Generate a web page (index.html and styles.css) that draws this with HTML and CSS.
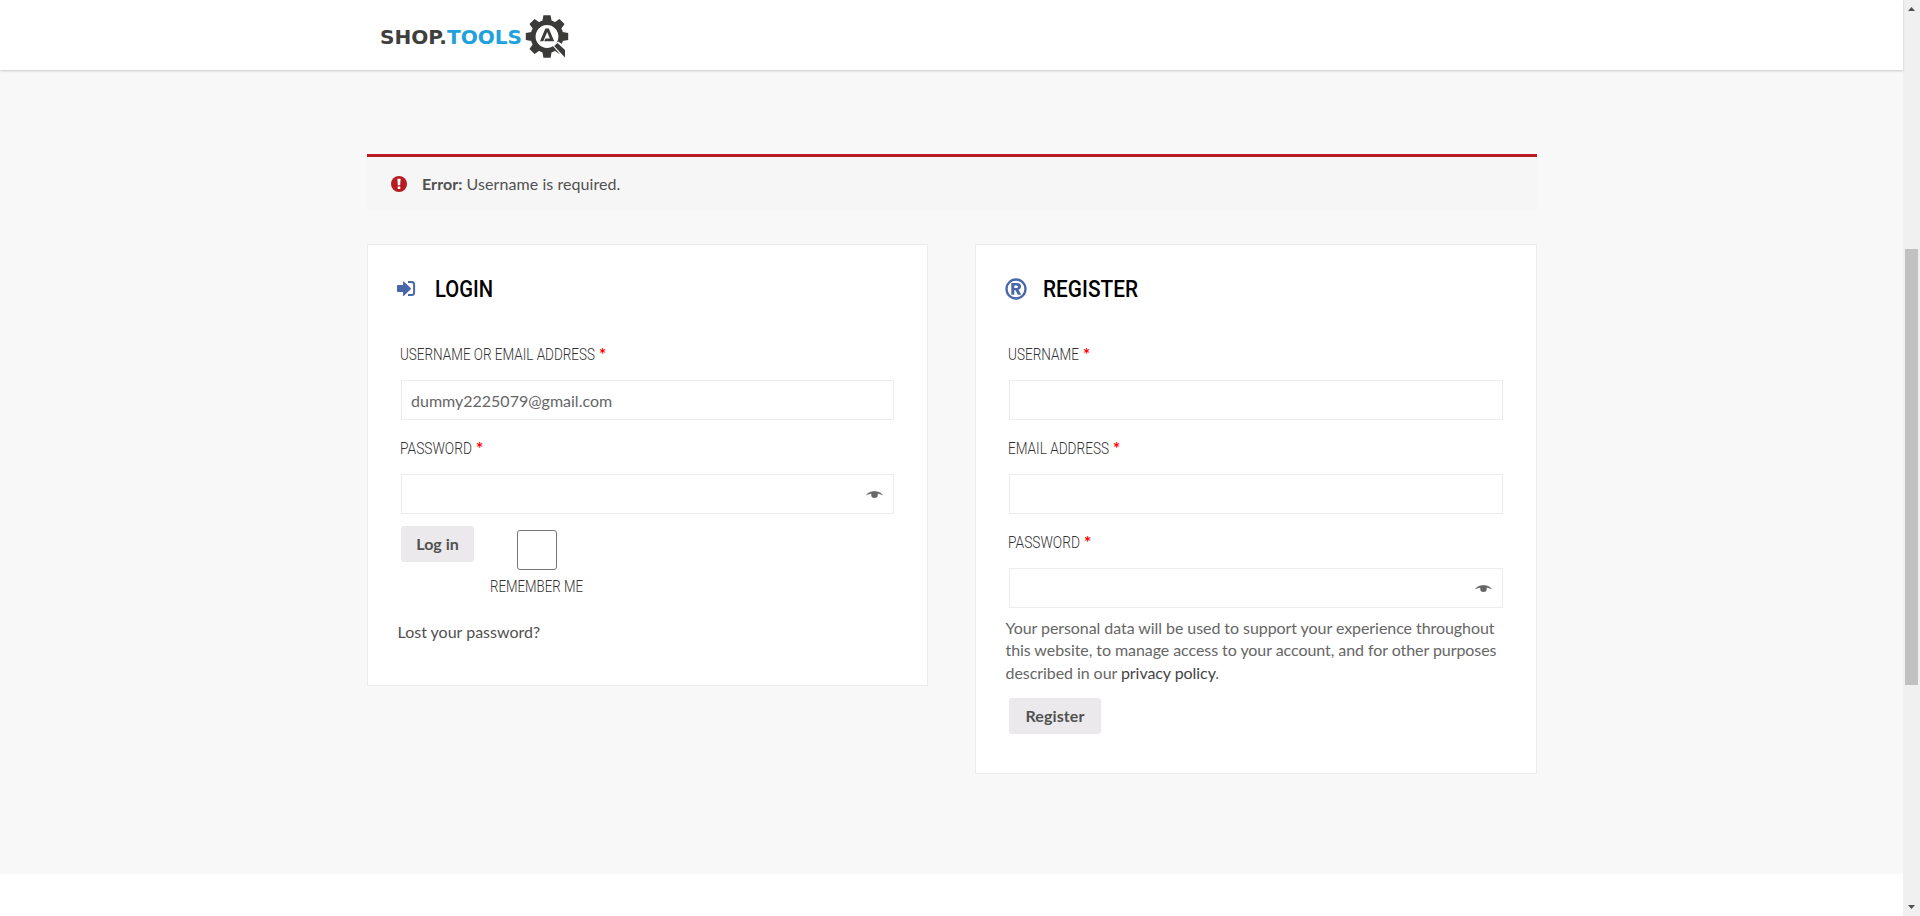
FILE: index.html
```html
<!DOCTYPE html>
<html lang="en">
<head>
<meta charset="utf-8">
<title>Shop.Tools – My account</title>
<link rel="stylesheet" href="styles.css">
</head>
<body>
<div class="page">
  <header class="header">
    <svg class="logo" width="190" height="50" viewBox="0 0 190 50">
      <g class="logo-text">
        <text x="0" y="33.500" textLength="67" lengthAdjust="spacingAndGlyphs" fill="#3f403e">SHOP.</text>
        <text x="67" y="33.500" textLength="75" lengthAdjust="spacingAndGlyphs" fill="#1ea1dc">TOOLS</text>
      </g>
      <g transform="translate(167 26.5)" fill="#3b3c3a">
        <circle r="16.5"/>
        <g><path id="t" d="M-4.6-15.500-3.600-21.200H3.600L4.600-15.500ZM-4.600 15.500-3.600 21.200H3.600L4.600 15.500Z"/>
        <use href="#t" transform="rotate(45)"/><use href="#t" transform="rotate(90)"/><use href="#t" transform="rotate(135)"/></g>
        <circle r="11.4" fill="#fff"/>
        <path d="M5.500 9 17 22.500H22V12L11 5Z" fill="#fff"/>
        <path d="M7.200 9.500 10.500 6.500 18 13.500V21Z"/>
        <path d="M-7 4.800-1.600-8H1.800L7.200 4.800H-2.800L-1.500 2H2.800L.2-4.500-3.700 4.800Z"/>
      </g>
    </svg>
  </header>
  <main class="main">
    <div class="notice">
      <svg class="notice-icon" width="16" height="16" viewBox="0 0 16 16"><circle cx="8" cy="8" r="8" fill="#b81c23"/><path d="M6.400 2.800h3.200L9.200 9.300H6.800ZM6.700 10.600h2.600V13H6.700Z" fill="#fff"/></svg>
      <p><strong>Error:</strong> Username is required.</p>
    </div>
    <div class="columns">
      <section class="card login">
        <h2 class="title">
          <svg width="20" height="22" viewBox="0 0 20 22"><path d="M0 8Q0 7 1 7H6V3.800Q6 3 7 3.700L13.700 10Q14.200 10.600 13.700 11.200L7 17.700Q6 18.300 6 17.300V14H1Q0 14 0 13Z" fill="#4767a8"/><path d="M11 4H14.500Q17.100 4 17.100 6.500V14.500Q17.100 17 14.500 17H11" fill="none" stroke="#4767a8" stroke-width="2"/></svg>
          <svg class="narrow" width="100" height="30"><text x="-1" y="23" textLength="58" lengthAdjust="spacingAndGlyphs">LOGIN</text></svg>
        </h2>
        <form class="form">
          <label class="label"><svg class="narrow light" width="194" height="22"><text x="-1" y="17" textLength="195" lengthAdjust="spacingAndGlyphs">USERNAME OR EMAIL ADDRESS</text></svg><span class="star">*</span></label>
          <div class="field">dummy2225079@gmail.com</div>
          <label class="label"><svg class="narrow light" width="71" height="22"><text x="-1" y="17" textLength="72" lengthAdjust="spacingAndGlyphs">PASSWORD</text></svg><span class="star">*</span></label>
          <div class="field password"><svg class="eye" width="17" height="9" viewBox="0 0 17 9"><path d="M.5 4.800C4 .3 13 .3 16.500 4.800 12 2.600 5 2.600.5 4.800Z" fill="#666" stroke="#666" stroke-width=".5"/><circle cx="8.500" cy="4.700" r="3.300" fill="#666"/></svg></div>
          <div class="actions">
            <button class="button" type="button">Log in</button>
            <label class="remember"><span class="box"></span><svg class="narrow light" width="94" height="22"><text x="0" y="17" textLength="93" lengthAdjust="spacingAndGlyphs">REMEMBER ME</text></svg></label>
          </div>
        </form>
        <a class="lost">Lost your password?</a>
      </section>
      <section class="card register">
        <h2 class="title">
          <svg width="22" height="22" viewBox="0 0 22 22"><circle cx="11" cy="11" r="9.500" fill="none" stroke="#4767a8" stroke-width="2.300"/><path d="M6.300 5.100H11.800C17.300 5.100 17 10.800 13.500 11.700L16.300 16.800H12.900L10.500 12.200H9.300V16.800H6.300ZM9.300 7.500V10H11.300C13.600 10 13.600 7.500 11.300 7.500Z" fill="#4767a8" fill-rule="evenodd"/></svg>
          <svg class="narrow" width="110" height="30"><text x="-1" y="23" textLength="95" lengthAdjust="spacingAndGlyphs">REGISTER</text></svg>
        </h2>
        <form class="form">
          <label class="label"><svg class="narrow light" width="70" height="22"><text x="-1" y="17" textLength="71" lengthAdjust="spacingAndGlyphs">USERNAME</text></svg><span class="star">*</span></label>
          <div class="field"></div>
          <label class="label"><svg class="narrow light" width="100" height="22"><text x="-1" y="17" textLength="101" lengthAdjust="spacingAndGlyphs">EMAIL ADDRESS</text></svg><span class="star">*</span></label>
          <div class="field"></div>
          <label class="label"><svg class="narrow light" width="71" height="22"><text x="-1" y="17" textLength="72" lengthAdjust="spacingAndGlyphs">PASSWORD</text></svg><span class="star">*</span></label>
          <div class="field password"><svg class="eye" width="17" height="9" viewBox="0 0 17 9"><path d="M.5 4.800C4 .3 13 .3 16.500 4.800 12 2.600 5 2.600.5 4.800Z" fill="#666" stroke="#666" stroke-width=".5"/><circle cx="8.500" cy="4.700" r="3.300" fill="#666"/></svg></div>
        </form>
        <p class="privacy">Your personal data will be used to support your experience throughout<br>this website, to manage access to your account, and for other purposes<br>described in our <a>privacy policy</a>.</p>
        <button class="button submit" type="button">Register</button>
      </section>
    </div>
  </main>
</div>
<aside class="scrollbar">
  <svg width="7" height="4" viewBox="0 0 7 4"><path d="M0 4 3.500 0 7 4Z" fill="#505050"/></svg>
  <div class="thumb"></div>
  <svg class="down" width="7" height="4" viewBox="0 0 7 4"><path d="M0 0 3.500 4 7 0Z" fill="#505050"/></svg>
</aside>
</body>
</html>
```
FILE: styles.css
```css
* { box-sizing: border-box; }
body { margin: 0; height: 916px; display: flex; overflow: hidden; background: #fff; color: #666; font: 16px/22.4px Lato, sans-serif; }
svg { display: block; flex: none; overflow: visible; }
p, h2 { margin: 0; }
.page { flex: 1; display: flex; flex-direction: column; }
.header { height: 70px; padding: 10px 0 0 380px; background: #fff; box-shadow: 0 1px 2px rgba(0,0,0,.2); z-index: 1; }
.logo-text { font: 700 20px "DejaVu Sans", sans-serif; }
.main { height: 804px; padding: 84px 0 0 367px; background: #f8f8f8; }
.notice { width: 1170px; height: 57px; display: flex; align-items: flex-start; gap: 16px; padding: 16px 23px; border-top: 3px solid #b81c23; background: #f6f6f6; color: #515151; letter-spacing: .07px; }
.notice-icon { margin: 3px -.500px 0 .500px; }
.columns { display: flex; align-items: flex-start; justify-content: space-between; width: 1170px; margin-top: 33px; }
.card { width: 561px; padding: 29px 29px 0; border: 1px solid #ececec; background: #fff; }
.login { height: 442px; }
.register { width: 562px; height: 530px; }
.title { display: flex; align-items: center; height: 30px; }
.title .narrow { margin-left: 19px; fill: #000; font: 500 24px Roboto, sans-serif; }
.register .title .narrow { margin-left: 17px; }
.title svg:first-child { margin-top: -1px; }
.form { padding: 35px 4px 0; }
.label { display: flex; gap: 4px; height: 41px; padding-top: 4px; }
.field + .label { margin-top: 13px; }
.light { fill: #333; font: 300 17px Roboto, sans-serif; }
.star { color: red; font: 700 17px/24px Lato, sans-serif; }
.field { height: 40px; display: flex; align-items: center; padding: 2px 10px 0 9px; border: 1px solid #ececec; background: #fff; }
.password { justify-content: flex-end; }
.eye { margin-bottom: 1px; }
.actions { display: flex; gap: 16px; margin-top: 12px; }
.button { width: 73px; height: 36px; padding: 0 0 2px; border: 0; border-radius: 3px; background: #ebe9eb; color: #515151; font: 700 16px Lato, sans-serif; }
.remember { display: flex; flex-direction: column; align-items: center; margin-top: 4px; }
.box { width: 40px; height: 40px; margin-bottom: 5px; border: 1px solid #767676; border-radius: 3px; }
.lost { display: block; margin-top: 24px; padding-left: .500px; color: #515151; }
.privacy { margin-top: 9px; padding-left: .500px; white-space: nowrap; letter-spacing: -.065px; }
.privacy a { color: #444; }
.submit { width: 92px; margin: 14px 0 0 4px; letter-spacing: .1px; }
.scrollbar { width: 17px; display: flex; flex-direction: column; align-items: center; padding: 7px 0; background: #f0f0f0; }
.thumb { width: 13px; height: 436px; margin-top: 238px; background: #c1c1c1; }
.down { margin-top: auto; }
```
